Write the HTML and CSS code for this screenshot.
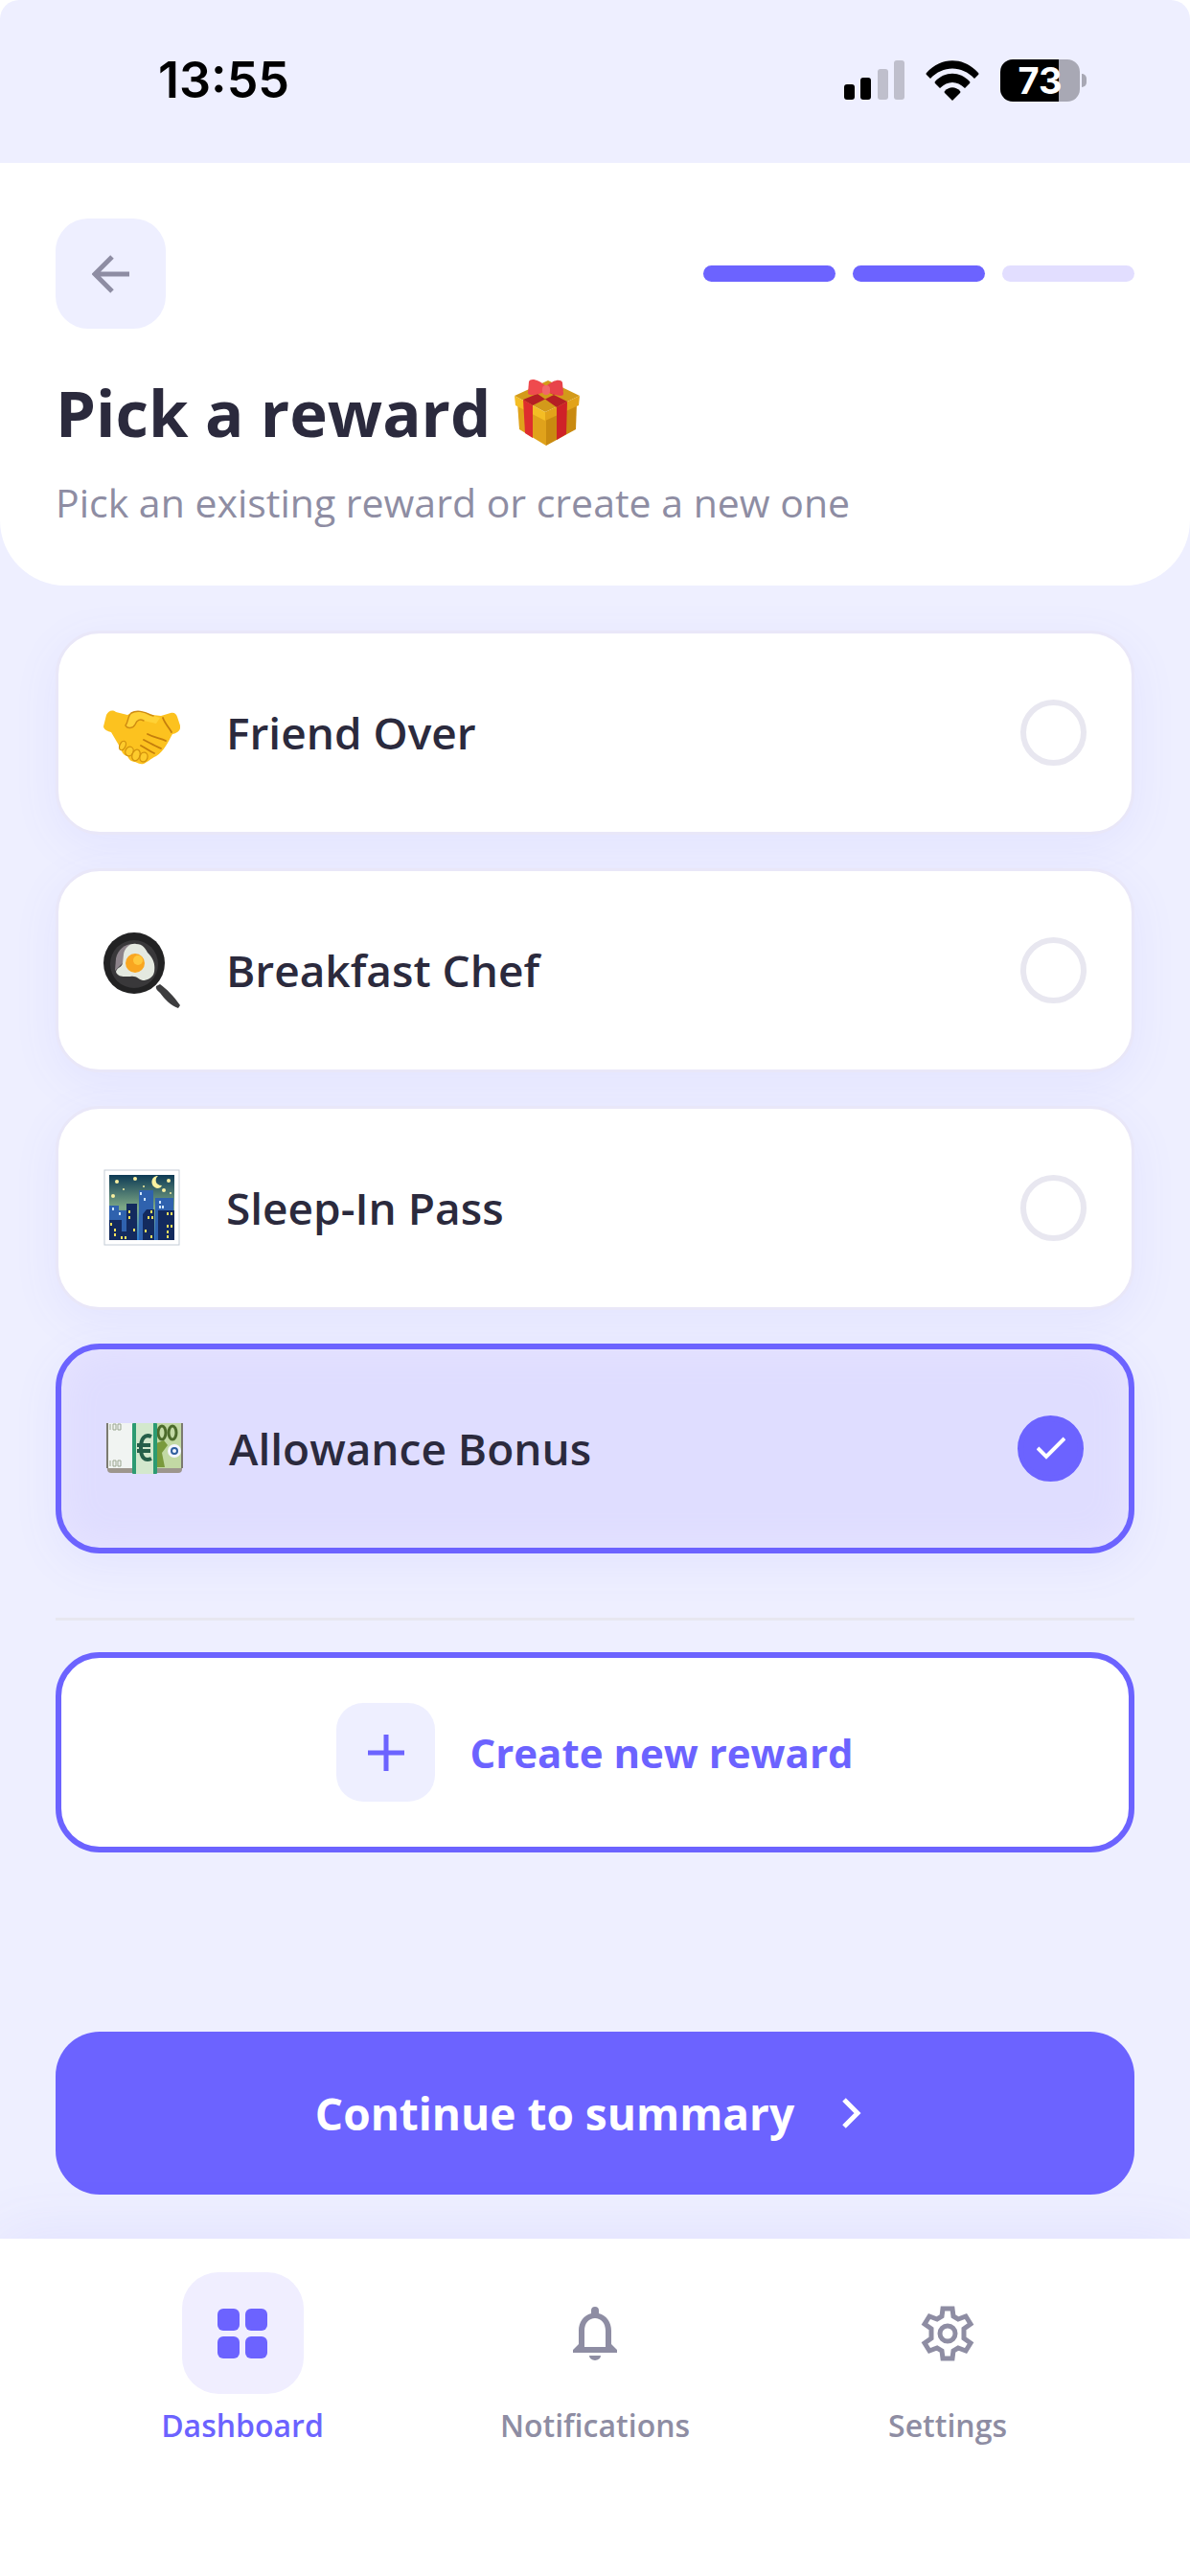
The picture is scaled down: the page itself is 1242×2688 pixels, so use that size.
FILE: index.html
```html
<!DOCTYPE html>
<html lang="en">

<head>
    <meta charset="UTF-8">
    <meta name="viewport" content="width=device-width, initial-scale=1.0">
    <title>Pick a reward</title>
    <link rel="stylesheet" href="styles.css">
</head>

<body>
    <div class="screen">
        <div class="status-bar">
            <span class="time">13:55</span>
            <div class="status-icons">
                <svg width="63" height="42" viewBox="0 0 63 42" aria-hidden="true">
                    <rect x="0" y="25" width="11" height="16" rx="3"/>
                    <rect x="17" y="18" width="11" height="23" rx="3"/>
                    <rect x="35" y="9" width="11" height="32" rx="3" fill="#bfbfcc"/>
                    <rect x="52" y="0" width="11" height="41" rx="3" fill="#bfbfcc"/>
                </svg>
                <svg width="56" height="42" viewBox="0 0 56 42" aria-hidden="true">
                    <path d="M1 13C16-4 40-4 55 13q1 1 0 2l-4 4C38 5 18 5 5 19l-4-4q-1-1 0-2z"/>
                    <path d="M10 22C20 11 36 11 46 22q1 1 0 2l-5 5C33 21 23 21 15 29l-5-5q-1-1 0-2z"/>
                    <path d="M20 32C25 27 31 27 36 32q1 1 0 2l-8 8-8-8q-1-1 0-2z"/>
                </svg>
                <div class="battery">
                    <div class="battery-level">73</div>
                    <div class="battery-cap"></div>
                </div>
            </div>
        </div>

        <header class="header">
            <div class="header-top">
                <button class="back-btn" type="button" aria-label="Back">
                    <svg width="40" height="40" viewBox="0 0 40 40" fill="none" stroke="#8e8da3" stroke-width="5">
                        <path d="M21 2 3 20l18 18M3 20h36"/>
                    </svg>
                </button>
                <div class="steps">
                    <span class="step done"></span>
                    <span class="step done"></span>
                    <span class="step"></span>
                </div>
            </div>
            <h1 class="title">Pick a reward
                <svg width="70" height="70" viewBox="0 0 70 70" aria-hidden="true">
                    <path d="M4 25 34 38v32L6 53z" fill="#e0a21b"/>
                    <path d="M66 25 34 38v32l31-17z" fill="#c98a10"/>
                    <path d="M1 18 36 2l33 16-36 17z" fill="#d39a1a"/>
                    <path d="M1 18l32 17v9L2 28z" fill="#f4bd24"/>
                    <path d="M69 18 33 35v9l35-16z" fill="#e2a31a"/>
                    <path d="M10 22l10 6v34l-8-5z" fill="#de2d2e"/>
                    <path d="M56 24l-11 6v34l10-6z" fill="#cf2228"/>
                    <path d="M10 22 44 8l8 4-32 16zM56 24 24 8l-6 3 27 19z" fill="#b51f24"/>
                    <path d="M34 8C26 1 18-1 16 3l-1 12c0 4 12 2 19-2z" fill="#ef4a4e"/>
                    <path d="M34 8c8-7 15-8 17-4l1 12c0 4-11 1-18-3z" fill="#e8434a"/>
                    <rect x="30" y="7" width="8" height="10" rx="4" fill="#f2666a"/>
                </svg>
            </h1>
            <p class="subtitle">Pick an existing reward or create a new one</p>
        </header>

        <main class="content">
            <form class="rewards">
                <label class="reward">
                    <svg class="emoji" viewBox="0 -5 80 80" aria-hidden="true">
                        <path d="M3 17C5 13 9 11 13 14l12 3 6-3c7-3 13 1 20 3l9 1 10-3c4-1 6 1 7 4l3 9c1 5-3 8-8 9-5 9-9 18-17 23-6 3-9 6-13 8-4 1-6-1-9-2-5 0-7-4-8-6-5-1-6-5-7-8L8 35C4 34 0 32 0 29z" fill="#fcc21f"/>
                        <path d="M29 15c5-3 13-2 20 2l10 3-4 6-13-3c-4-2-7-1-9 4-2 4-8 5-10 1 3-3 2-10 6-13z" fill="#ffd236"/>
                        <path d="M52 18l-3-1c-7-4-15-5-20-2-4 3-3 10-6 13 2 4 8 3 10-1 2-5 5-6 9-4" fill="none" stroke="#cf8c12" stroke-width="1.500" stroke-linecap="round"/>
                        <path d="M46 37c7 4 14 4 19 7M42 43c6 3 11 6 18 9M39 49c6 3 9 6 14 8M62 20c2 6 7 11 9 15" fill="none" stroke="#c47e0d" stroke-width="1.800" stroke-linecap="round"/>
                        <g fill="#fdcb2c" stroke="#d2920f" stroke-width="1.300">
                            <ellipse cx="20" cy="49" rx="3" ry="5" transform="rotate(25 20 49)"/>
                            <ellipse cx="27" cy="55" rx="4" ry="5" transform="rotate(25 27 55)"/>
                            <ellipse cx="34" cy="59" rx="4" ry="6" transform="rotate(20 34 59)"/>
                            <ellipse cx="42" cy="61" rx="4" ry="5" transform="rotate(15 42 61)"/>
                        </g>
                    </svg>
                    <span class="reward-name">Friend Over</span>
                    <span class="pick">
                        <input type="radio" name="reward" value="friend-over">
                    </span>
                </label>
                <label class="reward">
                    <svg class="emoji" viewBox="0 -1 80 80" aria-hidden="true">
                        <path d="M55 56l4-2c7 5 14 12 21 22l-2 3c-8-3-14-9-19-16-2-2-5-4-4-7z" fill="#3d3d3f"/>
                        <circle cx="32" cy="32" r="32" fill="#222223"/>
                        <circle cx="32" cy="33" r="25" fill="#39383a"/>
                        <path d="M13 27C15 17 24 11 32 12l-8 16-12 12z" fill="#8d848b"/>
                        <path d="M21 23c1-7 7-12 13-11 7 0 10 5 12 9 7 7 8 13 7 20-1 6-7 9-12 9-5-1-6-5-13-4-6 0-13 1-15-5 1-5 6-4 7-9z" fill="#e4e9e0"/>
                        <circle cx="33" cy="32" r="10" fill="#f9a620"/>
                        <circle cx="36" cy="29" r="5" fill="#ffc83c"/>
                    </svg>
                    <span class="reward-name">Breakfast Chef</span>
                    <span class="pick">
                        <input type="radio" name="reward" value="breakfast-chef">
                    </span>
                </label>
                <label class="reward">
                    <svg class="emoji" viewBox="0 0 80 80" aria-hidden="true">
                        <defs>
                            <linearGradient id="night" x1="0" y1="0" x2="0" y2="1">
                                <stop offset="0" stop-color="#0d3a55"/>
                                <stop offset=".5" stop-color="#7da785"/>
                                <stop offset="1" stop-color="#2a7bd0"/>
                            </linearGradient>
                        </defs>
                        <rect x="1" y="1" width="78" height="78" fill="#fff" stroke="#c3ccd6"/>
                        <rect x="6" y="6" width="68" height="68" fill="url(#night)"/>
                        <path d="M6 38h10v5h9v31H6zM37 22h15v52H37zM54 30h19v44H54z" fill="#2f62ae"/>
                        <path d="M24 36h11v38H24zM6 53h13v12h6v9H6zM41 47l4-5h8v32H41zM57 43h17v31H57z" fill="#132a5e"/>
                        <path d="M57 7c-8 0-9 11-1 13 3 0 4-1 5-3-7 0-8-7-4-10z" fill="#fbf3a0"/>
                        <g fill="#f8efa0">
                            <circle cx="14" cy="13" r="2"/>
                            <circle cx="33" cy="10" r="2"/>
                            <circle cx="68" cy="12" r="2"/>
                            <circle cx="63" cy="22" r="2"/>
                            <circle cx="10" cy="28" r="2"/>
                            <circle cx="21" cy="21" r="1"/>
                            <circle cx="42" cy="18" r="1"/>
                            <circle cx="70" cy="25" r="1"/>
                        </g>
                        <path d="M26 43h2v3h-2zM26 49h2v3h-2zM31 62h2v3h-2zM49 43h2v3h-2zM46 49h2v3h-2zM50 49h2v3h-2zM66 45h2v3h-2zM70 45h2v3h-2zM66 58h2v3h-2zM70 58h2v3h-2zM66 64h2v3h-2zM66 69h2v3h-2zM49 69h2v3h-2zM43 63h2v3h-2zM11 62h2v3h-2zM11 67h2v3h-2zM18 70h2v3h-2zM22 70h2v3h-2zM7 56h2v3H7z" fill="#f2e05c"/>
                        <path d="M38 24h2v3h-2zM42 30h2v3h-2zM58 33h2v3h-2zM58 38h2v3h-2zM61 38h2v3h-2zM9 40h2v3H9zM16 45h2v3h-2z" fill="#cfe6ff"/>
                    </svg>
                    <span class="reward-name">Sleep-In Pass</span>
                    <span class="pick">
                        <input type="radio" name="reward" value="sleep-in-pass">
                    </span>
                </label>
                <label class="reward selected">
                    <svg class="emoji" viewBox="0 1 80 80" aria-hidden="true">
                        <path d="M1 60h78v3q0 4-4 4H5q-4 0-4-4z" fill="#9d968d"/>
                        <path d="M1 15h30v47H1z" fill="#f1f4f2"/>
                        <path d="M50 15h29v47H50z" fill="#c2d9a4"/>
                        <path d="M52 36l8-3 4 5-6 8 3 15h-9z" fill="#7a9a3c"/>
                        <path d="M1 15v47M79 15v47" stroke="#7b7a70" stroke-width="2"/>
                        <path d="M4 16v6M7 16h3v6H7zM12 16h3v6h-3zM4 54v6M7 54h3v6H7zM12 54h3v6h-3z" fill="none" stroke="#9aa58f"/>
                        <ellipse cx="58" cy="25" rx="4" ry="7" fill="none" stroke="#4c6b2b" stroke-width="3"/>
                        <ellipse cx="69" cy="25" rx="4" ry="7" fill="none" stroke="#4c6b2b" stroke-width="3"/>
                        <circle cx="71" cy="44" r="7" fill="#f3f6ff"/>
                        <circle cx="71" cy="44" r="3" fill="none" stroke="#2f5f9e" stroke-width="2"/>
                        <rect x="27" y="15" width="26" height="53" rx="1" fill="#2c9b72"/>
                        <rect x="31" y="15" width="18" height="53" fill="#d3e8cd"/>
                        <path d="M47 29c-7-3-11 2-11 12s4 14 11 11M32 38h14M32 44h14" fill="none" stroke="#265f4a" stroke-width="4"/>
                    </svg>
                    <span class="reward-name">Allowance Bonus</span>
                    <span class="pick">
                        <input type="radio" name="reward" value="allowance-bonus" checked>
                        <svg class="tick" width="30" height="24" viewBox="0 0 30 24" fill="none" stroke="#fff" stroke-width="4" aria-hidden="true">
                            <path d="M1 12l9 9L29 2"/>
                        </svg>
                    </span>
                </label>
            </form>

            <hr class="divider">

            <button class="create-btn" type="button">
                <span class="plus">
                    <svg width="38" height="38" viewBox="0 0 38 38" stroke="#6c63ff" stroke-width="5" aria-hidden="true">
                        <path d="M19 0v38M0 19h38"/>
                    </svg>
                </span>
                Create new reward
            </button>

            <button class="continue-btn" type="button">
                Continue to summary
                <svg width="48" height="48" viewBox="0 0 48 48" fill="none" stroke="#fff" stroke-width="5" aria-hidden="true">
                    <path d="M16 10l14 14-14 14"/>
                </svg>
            </button>
        </main>

        <nav class="tab-bar">
            <a class="tab active" href="#dashboard">
                <span class="tab-icon">
                    <svg width="52" height="52" viewBox="0 0 52 52" fill="currentColor" aria-hidden="true">
                        <rect x="0" y="0" width="23" height="23" rx="6"/>
                        <rect x="29" y="0" width="23" height="23" rx="6"/>
                        <rect x="0" y="29" width="23" height="23" rx="6"/>
                        <rect x="29" y="29" width="23" height="23" rx="6"/>
                    </svg>
                </span>
                Dashboard
            </a>
            <a class="tab" href="#notifications">
                <span class="tab-icon">
                    <svg width="46" height="56" viewBox="0 0 46 56" fill="currentColor" aria-hidden="true">
                        <path fill-rule="evenodd" d="M19 7V4a4 4 0 0 1 8 0v3c8 2 13 9 13 18v14l6 6v3H0v-3l6-6V25C6 16 11 9 19 7zM12 42h22V25c0-8-5-13-11-13S12 17 12 25z"/>
                        <path d="M17 51h12a6 5 0 0 1-12 0z"/>
                    </svg>
                </span>
                Notifications
            </a>
            <a class="tab" href="#settings">
                <span class="tab-icon">
                    <svg width="58" height="58" viewBox="0 0 58 58" fill="none" stroke="currentColor" stroke-width="5" aria-hidden="true">
                        <path d="M24 3h10l1 8 5 3 8-3 5 8-7 5v10l7 5-5 8-8-3-5 3-1 8H24l-1-8-5-3-8 3-5-8 7-5V24l-7-5 5-8 8 3 5-3z"/>
                        <circle cx="29" cy="29" r="8"/>
                    </svg>
                </span>
                Settings
            </a>
        </nav>
    </div>
</body>
</html>
```
FILE: styles.css
```css
* {
    box-sizing: border-box;
}

body {
    margin: 0;
    background-color: #fff;
    color: #2b2a3d;
    font-family: "Open Sans", "Noto Sans", sans-serif;
}

button {
    border: none;
    padding: 0;
    font-family: inherit;
    cursor: pointer;
}

.screen {
    display: flex;
    flex-direction: column;
    min-height: 100vh;
    background-color: #eeefff;
    border-radius: 20px 20px 0 0;
}

/* status bar */
.status-bar {
    display: flex;
    justify-content: space-between;
    align-items: center;
    height: 170px;
    padding: 0 108px 3px 165px;
    color: #000;
    font-family: Inter, sans-serif;
}

.time {
    font-size: 52px;
    font-weight: 600;
}

.status-icons {
    display: flex;
    align-items: center;
    gap: 22px;
}

.battery {
    display: flex;
    align-items: center;
    gap: 2px;
}

.battery-level {
    width: 83px;
    height: 44px;
    border-radius: 13px;
    background: linear-gradient(to right, #000 73%, #a8a8b4 73%);
    color: #fff;
    font-size: 38px;
    font-weight: 700;
    line-height: 44px;
    text-align: center;
}

.battery-cap {
    width: 5px;
    height: 14px;
    border-radius: 0 5px 5px 0;
    background-color: #a8a8b4;
}

/* header */
.header {
    padding: 58px 58px 60px;
    background-color: #fff;
    border-radius: 0 0 68px 68px;
}

.header-top {
    display: flex;
    justify-content: space-between;
    align-items: center;
}

.back-btn {
    display: flex;
    justify-content: center;
    align-items: center;
    width: 115px;
    height: 115px;
    border-radius: 34px;
    background-color: #eeefff;
}

.steps {
    display: flex;
    gap: 18px;
}

.step {
    width: 138px;
    height: 17px;
    border-radius: 9px;
    background-color: #e2deff;
}

.step.done {
    background-color: #6c63ff;
}

.title {
    display: flex;
    align-items: center;
    gap: 24px;
    margin: 39px 0 19px;
    font-size: 67px;
    font-weight: 700;
    line-height: 96px;
}

.subtitle {
    margin: 0;
    color: #8e8da3;
    font-size: 41px;
    line-height: 54px;
}

/* rewards */
.content {
    display: flex;
    flex: 1;
    flex-direction: column;
    padding: 47px 58px 46px;
}

.rewards {
    display: flex;
    flex-direction: column;
    gap: 35px;
}

.reward {
    display: flex;
    align-items: center;
    gap: 48px;
    padding: 63px 47px 64px;
    border: 3px solid #e9e7f8;
    border-radius: 46px;
    background-color: #fff;
    box-shadow: 0 12px 48px rgba(108, 99, 255, 0.08);
    cursor: pointer;
}

.reward.selected {
    border: 6px solid #6c63ff;
    background-color: #dfddff;
    box-shadow: 0 12px 48px rgba(108, 99, 255, 0.08), inset 0 0 40px #e7e4ff;
}

.emoji {
    width: 80px;
    height: 80px;
}

.reward-name {
    flex: 1;
    font-size: 46px;
    font-weight: 600;
    line-height: 60px;
}

.pick {
    display: grid;
    place-items: center;
}

.pick input {
    grid-area: 1 / 1;
    appearance: none;
    width: 69px;
    height: 69px;
    margin: 0;
    border: 6px solid #e8e7f0;
    border-radius: 50%;
}

.pick input:checked {
    border-color: #6c63ff;
    background-color: #6c63ff;
}

.tick {
    grid-area: 1 / 1;
}

.divider {
    width: 100%;
    height: 3px;
    margin: 67px 0 33px;
    border: none;
    background-color: #e7e7f0;
}

.create-btn {
    display: flex;
    justify-content: center;
    align-items: center;
    gap: 36px;
    padding: 47px 0;
    border: 6px solid #6c63ff;
    border-radius: 46px;
    background-color: #fff;
    color: #6c63ff;
    font-size: 42px;
    font-weight: 700;
}

.plus {
    display: flex;
    justify-content: center;
    align-items: center;
    width: 103px;
    height: 103px;
    border-radius: 28px;
    background-color: #eeefff;
}

.continue-btn {
    display: flex;
    justify-content: center;
    align-items: center;
    gap: 36px;
    height: 170px;
    margin-top: auto;
    border-radius: 46px;
    background-color: #6c63ff;
    color: #fff;
    font-size: 46px;
    font-weight: 700;
}

/* bottom tabs */
.tab-bar {
    display: flex;
    padding: 35px 69px 136px;
    background-color: #fff;
    box-shadow: 0 0 64px rgba(108, 99, 255, 0.1);
}

.tab {
    display: flex;
    flex: 1;
    flex-direction: column;
    align-items: center;
    gap: 12px;
    color: #8e8da3;
    font-size: 32px;
    font-weight: 600;
    line-height: 42px;
    text-decoration: none;
}

.tab.active {
    color: #6c63ff;
}

.tab-icon {
    display: flex;
    justify-content: center;
    align-items: center;
    width: 127px;
    height: 127px;
    border-radius: 38px;
}

.active .tab-icon {
    background-color: #f0eeff;
}
```
